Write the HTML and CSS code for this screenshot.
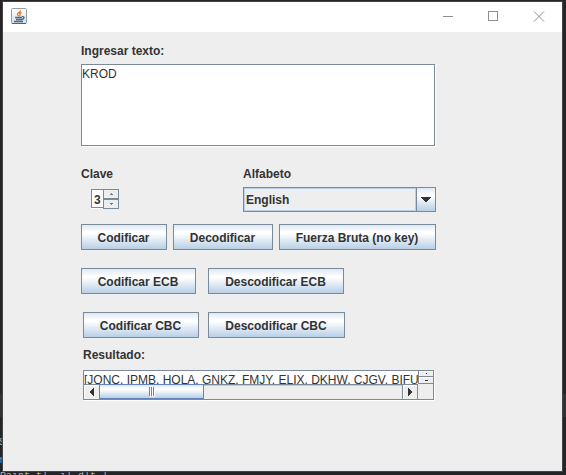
FILE: index.html
```html
<!DOCTYPE html>
<html lang="es">
<head>
<meta charset="utf-8">
<title>Cifrado</title>
<link rel="stylesheet" href="styles.css">
</head>
<body>
<div class="backdrop"><i class="band"></i><span class="code c1">S</span><span class="code c2">r</span><span class="code c3">Paint tl&nbsp; il dlt l</span></div>
<main class="window">
  <header class="titlebar">
    <svg class="java" width="16" height="16" viewBox="0 0 16 16">
      <defs><linearGradient id="jg" x1="0" y1="0" x2="0" y2="1"><stop offset="0" stop-color="#fff"/><stop offset="1" stop-color="#d3dde6"/></linearGradient></defs>
      <rect x=".5" y=".5" width="15" height="15" rx="1" fill="url(#jg)" stroke="#8fa0ad"/>
      <path d="M1 15.5h14" stroke="#48667f"/>
      <path d="M9.500 2.500C9.500 4 6.500 4.500 6.500 6.300c0 .9.700 1.200 1.200 1.900M10.500 4.500C8.500 5 8.300 5.800 8.900 6.400c.5.700 0 1.300-.6 1.700" fill="none" stroke="#e87a1d" stroke-width="1.300"/>
      <path d="M4 9.500h7M5 11.500h6M3 13.500h9M11 8.700c2.800-.5 2.500 2.100 0 2.800" fill="none" stroke="#4a6b85" stroke-width="1.300"/>
    </svg>
    <svg class="controls" width="102" height="12" viewBox="0 0 102 12" fill="none" stroke="#8f8f8f" shape-rendering="crispEdges">
      <path d="M0 5.500h10M45.500.5h9v9h-9z"/>
      <path d="M91 .5l10 10M101 .5l-10 10" shape-rendering="auto"/>
    </svg>
  </header>
  <section class="content">
    <div class="label l-in"><span>Ingresar texto:</span></div>
    <div class="textarea">KROD</div>
    <div class="labels"><span class="clave">Clave</span><span class="alfa">Alfabeto</span></div>
    <div class="inputs">
      <div class="spinner"><div class="num">3</div><div class="steps">
        <div><svg width="3" height="2"><path d="M1 0h1v1h1v1H0V1h1z"/></svg></div>
        <div><svg width="3" height="2"><path d="M0 0h3v1H2v1H1V1H0z"/></svg></div></div></div>
      <div class="combo"><div class="value"><span>English</span></div><div class="drop"><svg width="10" height="5" shape-rendering="crispEdges"><path d="M0 0h10v1H9v1H8v1H7v1H6v1H4V4H3V3H2V2H1V1H0z"/></svg></div></div>
    </div>
    <div class="row r1"><button class="b1"><span>Codificar</span></button><button class="b2"><span>Decodificar</span></button><button class="b3"><span>Fuerza Bruta (no key)</span></button></div>
    <div class="row r2"><button class="b4"><span>Codificar ECB</span></button><button class="b5"><span>Descodificar ECB</span></button></div>
    <div class="row r3"><button class="b6"><span>Codificar CBC</span></button><button class="b7"><span>Descodificar CBC</span></button></div>
    <div class="label l-out"><span>Resultado:</span></div>
    <div class="result">
      <div class="top"><div class="text"><span>[JQNC, IPMB, HOLA, GNKZ, FMJY, ELIX, DKHW, CJGV, BIFU,</span></div>
        <div class="vbar"><div class="up"><i></i></div><div class="down"><i></i></div></div></div>
      <div class="bottom"><div class="arrow left"><svg width="4" height="8" shape-rendering="crispEdges"><path d="M4 0v8H3V7H2V6H1V5H0V3h1V2h1V1h1V0z"/></svg></div><div class="thumb"><i></i><i></i><i></i></div><div class="track"></div><div class="arrow right"><svg width="4" height="8" shape-rendering="crispEdges"><path d="M0 0h1v1h1v1h1v1h1v2H3v1H2v1H1v1H0z"/></svg></div><div class="corner"></div></div>
    </div>
  </section>
</main>
</body>
</html>
```
FILE: styles.css
```css
* { box-sizing: border-box; }
body {
  margin: 0;
  padding: 2px 4px 4px 3px;
  height: 475px;
  overflow: hidden;
  background: #252527;
  font: bold 12px/14px "Liberation Sans", Arial, sans-serif;
  color: #333;
}
svg { display: block; }
.backdrop { position: absolute; inset: 0; overflow: hidden; }
.band { position: absolute; left: 0; right: 0; top: 394px; height: 23px; background: #2f3336; }
.code { position: absolute; font: 10px/12px "Liberation Mono", monospace; color: #a9b0b3; white-space: pre; }
.c1 { left: -1px; top: 437px; }
.c2 { left: -1px; top: 455px; color: #5d9fc4; }
.c3 { left: 0; top: 471px; }
.window { position: relative; width: 559px; height: 469px; background: #eee; box-shadow: 0 0 0 1px #444; }
.titlebar { height: 30px; background: #fff; display: flex; justify-content: space-between; padding: 6px 17px 0 8px; }
.controls { margin-top: 3px; }
.content { padding: 12px 0 0 78px; }
.label { height: 14px; white-space: nowrap; }
.textarea {
  width: 354px; height: 82px; margin-top: 6px; padding: 1px 0 0;
  border: 1px solid #7a8a99; background: #fff; box-shadow: 1px 1px #fff;
  font-weight: normal; line-height: 16px;
}
.labels { display: flex; height: 14px; margin-top: 21px; }
.clave { width: 162px; }
.inputs { display: flex; align-items: flex-start; margin-top: 6px; height: 25px; }
.spinner { display: flex; width: 28px; height: 20px; margin: 2px 124px 0 10px; }
.num { width: 12px; height: 19px; border: solid #7a8a99; border-width: 1px 0 1px 1px; background: #fff; padding: 3px 0 0 2px; box-shadow: 0 1px #fff; }
.steps { width: 16px; border: 1px solid #7a8a99; }
.steps div { height: 8px; display: grid; place-items: center; fill: #6c7c8b; }
.steps div + div { height: 10px; border-top: 2px solid #7a8a99; }
.combo { display: flex; width: 193px; height: 25px; border: 1px solid #7a8a99; }
.value { flex: 1; border: 1px solid #b8cfe5; padding: 4px 0 0 1px; }
.drop { width: 19px; border-left: 1px solid #7a8a99; background: linear-gradient(#dde8f3, #fff 30%, #fff 35%, #b8cfe5); display: grid; place-items: center; fill: #333; }
.row { display: flex; height: 26px; }
.r1 { margin-top: 12px; gap: 6px; }
.r2 { margin-top: 18px; gap: 12px; }
.r3 { margin-top: 18px; padding-left: 2px; gap: 9px; }
button {
  height: 26px; padding: 1px 1px 0 0; border: 1px solid #7a8a99; border-radius: 0; color: #333;
  font: inherit; white-space: nowrap; text-align: center;
  background: linear-gradient(#dde8f3, #fff 30%, #fff 35%, #b8cfe5);
}
.b1 { width: 86px; } .b2 { width: 100px; } .b3 { width: 157px; }
.b4 { width: 115px; } .b5 { width: 136px; }
.b6 { width: 116px; } .b7 { width: 137px; }
.l-out { margin: 10px 0 0 2px; }
.result { width: 351px; height: 30px; margin: 8px 0 0 2px; border: 1px solid #7a8a99; box-shadow: 1px 1px #fff; }
.top { display: flex; height: 13px; }
.text { width: 335px; background: #fff; overflow: hidden; white-space: nowrap; font-weight: normal; line-height: 19px; border-right: 1px solid #7a8a99; }
.vbar { flex: 1; }
.vbar div { height: 6px; border-bottom: 1px solid #7a8a99; box-shadow: inset 1px 1px #fff; display: grid; place-items: center; }
.vbar .down { height: 7px; }
.vbar i { width: 3px; height: 1px; background: #333; }
.vbar .up i { width: 1px; }
.bottom { display: flex; height: 15px; }
.arrow { width: 15px; display: grid; place-items: center; fill: #333; border-top: 1px solid #7a8a99; box-shadow: inset 1px 1px #fff; }
.thumb { width: 105px; border: 1px solid #6382bf; background: linear-gradient(#dde8f3, #fff 30%, #fff 35%, #b8cfe5); display: flex; justify-content: center; align-items: center; gap: 1px; }
.thumb i { width: 1px; height: 9px; background: #6382bf; box-shadow: 1px 1px #fff; }
.track { flex: 1; border-top: 1px solid #7a8a99; box-shadow: inset 0 1px #b8cfe5; }
.arrow.right { width: 16px; border: solid #7a8a99; border-width: 1px 1px 0; }
.corner { width: 15px; }
```
